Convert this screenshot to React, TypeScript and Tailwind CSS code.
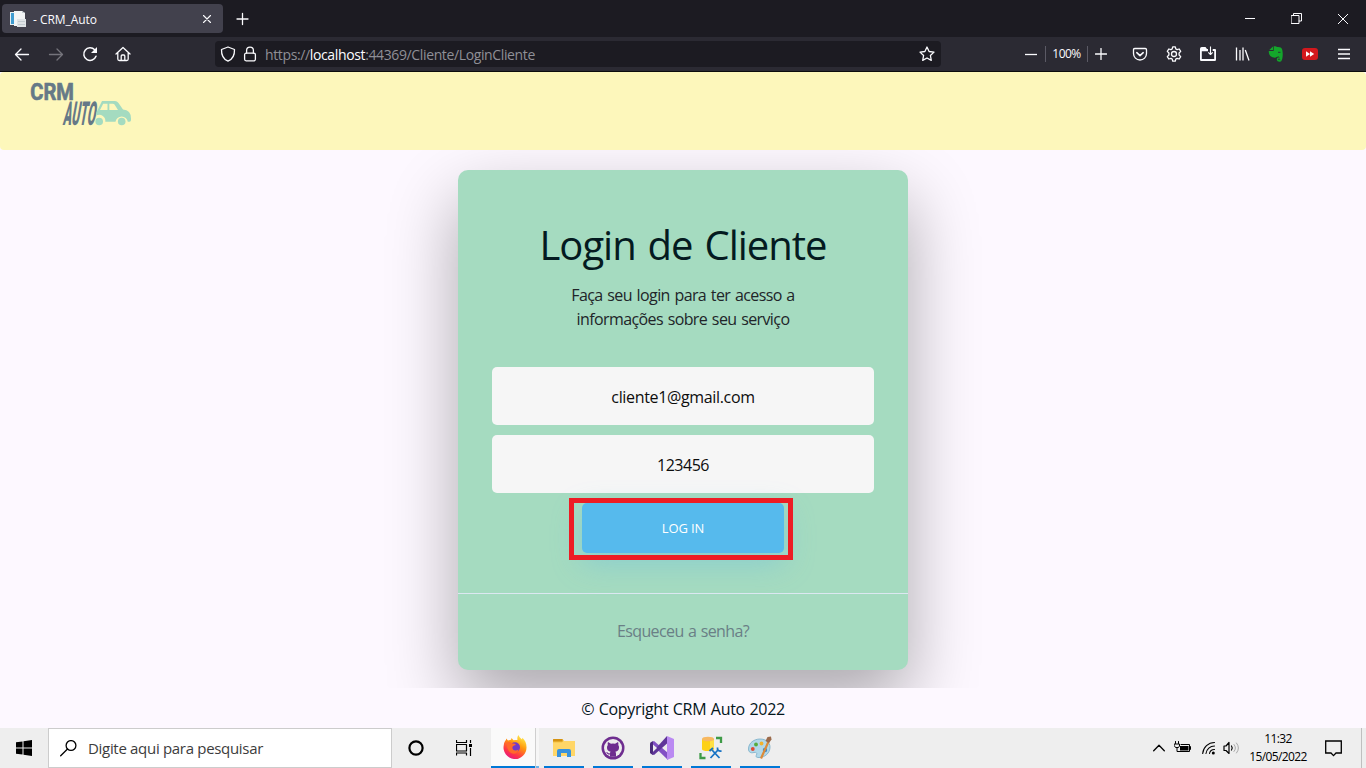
import React from 'react';

type IconProps = { className?: string; children: React.ReactNode; w?: number; h?: number };

function Icon({ className = '', children, w = 16, h = 16 }: IconProps) {
  return (
    <svg
      width={w}
      height={h}
      viewBox={`0 0 ${w} ${h}`}
      fill="none"
      stroke="currentColor"
      strokeWidth="1.3"
      strokeLinecap="round"
      strokeLinejoin="round"
      className={`block shrink-0 ${className}`}
    >
      {children}
    </svg>
  );
}

function TabBar() {
  return (
    <div className="flex h-[37px] items-start bg-[#1c1b22] text-[#fbfbfe]">
      <div className="ml-0.5 mt-1 flex h-[29px] w-[221px] items-center rounded bg-[#42414d] pl-2 pr-[11px]">
        <Icon className="mr-[7px]">
          <g stroke="none">
            <path d="M0 1h5v13H0z" fill="#e6eef2" />
            <path d="M1 2h3v11H1z" fill="#3f9bd0" />
            <path d="M4 0h8l3 2v13H4z" fill="#f2f4f5" />
            <path d="M12 0l3 2h-3z" fill="#c3cbd0" />
            <path d="M7 8h9v8H7z" fill="#dfe3e6" />
            <path d="M8 10h7v1H8zM8 13h7v1H8z" fill="#c3cbd0" />
          </g>
        </Icon>
        <span className="flex-1 whitespace-nowrap pt-0.5 text-[12px] tracking-[-0.05px]">- CRM_Auto</span>
        <Icon w={10} h={10}>
          <path d="M1.5 1.5l7 7M8.5 1.5l-7 7" strokeWidth="1.1" />
        </Icon>
      </div>
      <Icon w={14} h={14} className="ml-3 mt-3">
        <path d="M7.500 1.500v11M2 7h11" />
      </Icon>
      <div className="ml-auto flex h-[37px] items-center gap-9 pr-[18px]">
        <Icon w={10} h={10}>
          <path d="M0 4.500h10" strokeWidth="1" strokeLinecap="butt" />
        </Icon>
        <Icon w={11} h={11}>
          <path d="M.5 2.500h7.500v8H.5zM2.500 2.500v-2h8v7.500h-2.500" strokeWidth="1" />
        </Icon>
        <Icon w={10} h={10}>
          <path d="M0 0l10 10M10 0L0 10" strokeWidth="1" />
        </Icon>
      </div>
    </div>
  );
}

function NavBar() {
  return (
    <div className="flex h-[35px] items-center border-b border-[#0c0c0d] bg-[#2b2a33] text-[#fbfbfe]">
      <div className="ml-[14px] flex w-[201px] items-center gap-[18px]">
        <Icon>
          <path d="M14.500 8.500h-13M7 3L1.500 8.500 7 14" />
        </Icon>
        <Icon className="text-[#75747c]">
          <path d="M1.500 8.500h13M9 3l5.500 5.500L9 14" />
        </Icon>
        <Icon>
          <path d="M14 10.300A6.300 6.300 0 1 1 12.700 3.800" strokeWidth="1.500" />
          <path d="M15 1v6H9z" fill="currentColor" stroke="none" />
        </Icon>
        <Icon className="-ml-px">
          <path d="M1 8l7-6.500L15 8M2.800 6.800V13q0 1.500 1.500 1.500h7.400q1.500 0 1.500-1.500V6.800M6.200 14.500V10q0-1 1-1h1.600q1 0 1 1v4.500" />
        </Icon>
      </div>
      <div className="flex h-[26px] w-[726px] items-center rounded bg-[#1c1b22] pl-[5px] pr-1.5">
        <Icon>
          <path d="M8 1l6.500 2.500C14.700 9 12 13.500 8 15.200 4 13.500 1.300 9 1.500 3.500z" />
        </Icon>
        <Icon className="ml-1.5">
          <rect x="2.600" y="7.200" width="10.800" height="7.600" rx="1.500" />
          <path d="M4.600 7V4.500a3.400 3.400 0 0 1 6.800 0V7" />
        </Icon>
        <span className="ml-[7px] flex-1 whitespace-nowrap pt-px text-[14px] tracking-[-0.37px] text-[#8f8f96]">
          https://<span className="text-[#fbfbfe]">localhost</span>:44369/Cliente/LoginCliente
        </span>
        <Icon>
          <path d="M8 1l2.100 4.500 4.900.6-3.600 3.400.9 4.900L8 12l-4.300 2.400.9-4.900L1 6.100l4.900-.6z" />
        </Icon>
      </div>
      <div className="ml-auto flex items-center pr-[14px]">
        <Icon w={12} h={12}>
          <path d="M0 6.500h12" strokeLinecap="butt" />
        </Icon>
        <span className="ml-2 flex h-4 w-[43px] items-center justify-center border-x border-[#5b5a65] text-[12px] tracking-[-0.55px]">
          100%
        </span>
        <Icon w={12} h={12} className="ml-[7px]">
          <path d="M6 .5v11M.5 6h11" />
        </Icon>
        <div className="ml-[25px] flex gap-[18px]">
          <Icon>
            <path d="M2.700 2.500h10.600q1.200 0 1.200 1.200v3.800a6.500 6.500 0 0 1-13 0V3.700q0-1.200 1.200-1.200z" />
            <path d="M4.800 6.700L8 9.700l3.200-3" strokeWidth="1.600" />
          </Icon>
          <Icon>
            <path d="M6.700.8h2.600l.5 2.100 1.300.8 2.100-.7 1.500 2.400-1.600 1.600v2l1.600 1.600-1.500 2.400-2.100-.7-1.300.8-.5 2.100H6.700l-.5-2.100-1.300-.8-2.100.7-1.500-2.400L2.900 9V7L1.300 5.400 2.800 3l2.100.7 1.300-.8z" />
            <circle cx="8" cy="8" r="2.500" />
          </Icon>
          <Icon>
            <path
              d="M1.800 1H5.500L7 3h1v2.300H1.800V13h12.400V5h-1.500V3H15q1 0 1 1v9.800q0 1.200-1.200 1.200H1.200Q0 15 0 13.800V2.800Q0 1 1.800 1z"
              fill="currentColor"
              stroke="none"
              fillRule="evenodd"
            />
            <path d="M10.500.5v8M8.300 6.300l2.200 2.200 2.200-2.200" strokeWidth="1.100" strokeLinecap="butt" />
          </Icon>
          <Icon className="translate-x-px">
            <path d="M1.500 1.500v13M5 4v10.500M8 1.500v13M10.300 4l3.700 10.500" strokeLinecap="butt" />
          </Icon>
          <Icon>
            <g fill="#14a52b" stroke="none">
              <path d="M1.300 4L5 .5V4zM5.700.2C7.500 0 8.500.8 10 1c3 .2 3.800 1 4.300 3 .8 3.800.5 8.500-.8 10.700-.9 1.600-4.700 1.300-4.700-1.200 0-2 1.900-2.500 2.800-1.500-.2-1.900-2-1.500-3-.9-.8 1.100-2.500.7-4.100.2C2 10.500.5 8 .8 4.900h4.900z" />
            </g>
            <path d="M10.400 6.300h1.700M10.300 13.200q1-.6 1.700.2" stroke="#2b2a33" strokeWidth=".9" />
          </Icon>
          <Icon>
            <rect x="0" y="2" width="16" height="12" rx="3" fill="#d3181d" stroke="none" />
            <path d="M4 5.300v5.400L8 8zM8 5.300v5.400L12.200 8z" fill="white" stroke="none" />
          </Icon>
          <Icon>
            <path d="M2 3.500h12M2 8h12M2 12.500h12" strokeLinecap="butt" />
          </Icon>
        </div>
      </div>
    </div>
  );
}

function Logo() {
  return (
    <svg width="110" height="56" viewBox="0 0 110 56" className="block overflow-visible">
      <text
        transform="translate(.3 20.300) scale(.84 1)"
        fontFamily="Roboto, sans-serif"
        fontWeight="700"
        fontSize="24"
        fill="#667987"
        stroke="#667987"
        strokeWidth=".7"
        strokeLinejoin="round"
        textLength="52"
        lengthAdjust="spacing"
      >
        CRM
      </text>
      <text
        transform="translate(32.500 45) skewX(-10) scale(.5 1)"
        fontFamily="Roboto, sans-serif"
        fontWeight="900"
        fontSize="33"
        fill="#667987"
        textLength="64"
        lengthAdjust="spacingAndGlyphs"
      >
        AUTO
      </text>
      <path
        fillRule="evenodd"
        fill="#a4dbc0"
        d="M72 21h13q2 0 3.500 2l4.500 6.500q8 .5 8 9V40q0 1.800-1.500 1.800H97.800a6.200 6.200 0 0 0-12.300 0H75.300a6.200 6.200 0 0 0-8.800-6.500v-3zM70 30h7.500v-6.300h-4.300zM79.300 23.700V30h8.700l-3.500-5.400q-.7-.9-1.700-.9z"
      />
      <g fill="#a4dbc0">
        <circle cx="69.200" cy="41.500" r="3.800" />
        <circle cx="91.700" cy="41.500" r="3.800" />
      </g>
    </svg>
  );
}

function LoginCard() {
  return (
    <div className="flex h-[500px] w-[450px] flex-col items-center rounded-[10px] bg-[#a5dbc0] text-center shadow-[0_30px_70px_0_rgba(0,0,0,0.33)]">
      <h1 className="mt-[51px] whitespace-nowrap text-[40px] leading-[48px] tracking-[-1px] text-[#041a20] [word-spacing:2.5px]">
        Login de Cliente
      </h1>
      <p className="mt-[14px] whitespace-nowrap text-[16px] leading-6 tracking-[-0.6px] text-[#212529] [word-spacing:1.1px]">
        Faça seu login para ter acesso a
        <br />
        informações sobre seu serviço
      </p>
      <div className="mt-9 flex h-[58px] w-[382px] items-center justify-center rounded-[5px] bg-[#f6f6f6] pt-0.5 text-[16px] tracking-[-0.34px] text-[#0d0d0d]">
        cliente1@gmail.com
      </div>
      <div className="mt-2.5 flex h-[58px] w-[382px] items-center justify-center rounded-[5px] bg-[#f6f6f6] pt-0.5 text-[16px] tracking-[-0.5px] text-[#0d0d0d]">
        123456
      </div>
      <div className="relative mt-2.5">
        <button className="block h-[50px] w-[202px] rounded-[5px] bg-[#56baed] pt-0.5 text-[13px] tracking-[-0.1px] text-white shadow-[0_10px_30px_0_rgba(95,186,233,0.4)]">
          LOG IN
        </button>
        <div className="absolute -left-[13px] -top-[5px] h-[62px] w-[224px] border-[5px] border-[#ed1c24]" />
      </div>
      <div className="mt-10 flex w-full flex-1 items-center justify-center border-t border-[#dce8f1] pb-0.5 text-[16px] tracking-[-0.6px] text-[#6a7f86] [word-spacing:0.8px]">
        Esqueceu a senha?
      </div>
    </div>
  );
}

function Page() {
  return (
    <div className="flex h-[656px] flex-col bg-[#fdf8ff]">
      <header className="h-[78px] shrink-0 rounded bg-[#fdf7bb] pl-[30px] pt-2">
        <Logo />
      </header>
      <main className="flex h-[538px] shrink-0 justify-center overflow-hidden pt-5">
        <LoginCard />
      </main>
      <footer className="flex h-10 items-center justify-center pb-px pt-0.5 text-[16px] tracking-[-0.3px] text-[#04151c] [word-spacing:0.7px]">
        © Copyright CRM Auto 2022
      </footer>
    </div>
  );
}

function FirefoxIcon() {
  return (
    <svg width="24" height="24" viewBox="0 0 24 24" className="block">
      <defs>
        <linearGradient id="fox" x1="0.8" y1="0" x2="0.25" y2="1">
          <stop offset="0" stopColor="#fff44f" />
          <stop offset=".4" stopColor="#ff980e" />
          <stop offset=".75" stopColor="#ff3647" />
          <stop offset="1" stopColor="#e31587" />
        </linearGradient>
      </defs>
      <path
        fill="url(#fox)"
        d="M15.500 0c.5 2 2 3.200 3.500 4.500l.4-1.700C22 5 23.500 8.500 23.500 12A11.500 11.500 0 1 1 .8 10C1 7.500 2 6 3 5V3.500l2 2 3-.8L8.500 3l2 2.200c2-.3 3.500-.3 4-.2-.5-2 .2-3.800 1-5z"
      />
      <circle cx="12" cy="12.300" r="5" fill="#7139c8" />
      <path d="M4 7.500c2-1 4-.5 5.500 1 2-.2 3 .5 3.500 1.500-2 .3-3 1-3.500 2-.7 3.300 3 4.500 6 2.500-.5 3.500-4 5-7 3.700C5 16.500 3.500 12 4 7.500z" fill="#ff6a2a" />
    </svg>
  );
}

function FolderIcon() {
  return (
    <svg width="22" height="20" viewBox="0 0 22 20" className="block">
      <path d="M0 1.500Q0 1 .8 1h8.700L11 3h10q1 0 1 1v14H0z" fill="#f5c243" />
      <path d="M0 1.500Q0 1 .8 1H9.500v2.500H0z" fill="#d49212" />
      <path d="M0 4.500h9L10.500 3H22v15H0z" fill="#ffd667" />
      <path d="M4 19v-6q0-2 2-2h10q2 0 2 2v6h-4v-4H8v4z" fill="#3892dc" />
    </svg>
  );
}

function GithubIcon() {
  return (
    <svg width="24" height="24" viewBox="0 0 24 24" className="block">
      <circle cx="12" cy="12" r="11.500" fill="#6e2d8f" />
      <circle cx="12" cy="12" r="9" fill="#ededed" />
      <path
        d="M7 6l3 1.700q2-.4 4 0L17 6q.7 1.500.3 3 1 1.300.7 3-.3 3.300-3.700 3.700.7.700.7 2v3h-6v-2.200c-2 .4-2.800-.8-3.300-1.800L5 16c2-.4 2 2 4 1.300q0-1.200.7-1.600Q6.300 15.300 6 12q-.2-1.700.8-3-.4-1.500.2-3z"
        fill="#6e2d8f"
      />
    </svg>
  );
}

function VisualStudioIcon() {
  return (
    <svg width="24" height="24" viewBox="0 0 24 24" className="block">
      <path d="M1.500 6L4 5l14 12v7L2 8.500z" fill="#8250c4" />
      <path d="M0 7.300Q0 6.300 3 5.200V19Q0 17.800 0 16.700z" fill="#4a2a7a" />
      <path d="M3 15.500L17 0v7.500L4 19l-2-.8z" fill="#5f3599" />
      <path d="M3 8.500L7 12l-4 3.700z" fill="#eee" />
      <path d="M17 0l7 3v18l-7 3z" fill="#ba8af2" />
    </svg>
  );
}

function DatabaseToolsIcon() {
  return (
    <svg width="24" height="24" viewBox="0 0 24 24" className="block">
      <path d="M3 3v10q0 2 6 2t6-2V3z" fill="#fdd116" />
      <path d="M11 4h4v9q0 1-4 1.900z" fill="#ffe045" />
      <ellipse cx="9" cy="3" rx="6" ry="2.300" fill="#f7b860" />
      <path d="M17 2h5v5M1.500 17v5h5" fill="none" stroke="#3e9b47" strokeWidth="2.300" />
      <g fill="none" stroke="#1672c4" strokeWidth="1.800">
        <path d="M11.500 22l7.500-8M13 14l7.500 8" />
        <path d="M18.500 11.500q-.5 4 4 3.500M10.500 15l3.500-3" />
      </g>
    </svg>
  );
}

function PaintIcon() {
  return (
    <svg width="24" height="24" viewBox="0 0 24 24" className="block">
      <path
        d="M12 3c6 0 10 3.500 10 8 0 6-5 10.500-11 10.500-3 0-3.500-1-2.500-2.500 1-2-.5-3-2.500-2.500C2.500 17.500.5 16 .5 13 .5 7 6 3 12 3z"
        fill="#b2d8e9"
        stroke="#76acc7"
        strokeWidth=".8"
      />
      <circle cx="4.800" cy="13" r="1.900" fill="#e04935" />
      <circle cx="8" cy="8.500" r="1.900" fill="#55ac3e" />
      <circle cx="13.500" cy="7.500" r="1.900" fill="#f2b22e" />
      <circle cx="17" cy="14" r="2.200" fill="#3b86c9" />
      <path d="M20.500 5.500L13 22.500" stroke="#dc8b3a" strokeWidth="2.200" />
      <path d="M17.500 5l2-4 3.500-.5.500 3L21 7z" fill="#9b6b4c" />
    </svg>
  );
}

function Taskbar() {
  return (
    <div className="flex h-10 items-center overflow-hidden bg-[#eeeeee] text-black">
      <div className="flex w-12 justify-center">
        <Icon>
          <path d="M0 2.300L6.500 1.400v6.100H0zM7.500 1.200L16 0v7.500H7.500zM0 8.500h6.500v6.100L0 13.700zM7.500 8.500H16V16l-8.500-1.200z" fill="currentColor" stroke="none" />
        </Icon>
      </div>
      <div className="flex h-10 w-[344px] items-center border border-[#cccccc] bg-white pl-[11px]">
        <Icon w={17} h={17}>
          <circle cx="11" cy="5.500" r="4.900" />
          <path d="M7.500 9L.7 15.800" />
        </Icon>
        <span className="ml-[11px] whitespace-nowrap text-[15px] tracking-[-0.31px] text-[#3c3c3c]">Digite aqui para pesquisar</span>
      </div>
      <div className="flex w-12 justify-center">
        <Icon>
          <circle cx="8" cy="8" r="6.600" strokeWidth="2.200" />
        </Icon>
      </div>
      <div className="flex w-12 justify-center">
        <Icon>
          <path d="M.5 0v2.500h10V0M.5 15.500V13h10v2.500M.5 4.500h10v6.500H.5zM14.500 0v3M14.500 8v8" strokeWidth="1.200" strokeLinecap="butt" />
          <path d="M13 4h3v3h-3z" fill="currentColor" stroke="none" />
        </Icon>
      </div>
      <div className="ml-[3px] flex h-10">
        <div className="flex w-12">
          <div className="flex h-10 w-11 items-center justify-center border-b-2 border-[#0078d7] bg-[#fafafa] pl-1">
            <FirefoxIcon />
          </div>
          <div className="h-10 w-px bg-[#cfcfcf]" />
          <div className="h-10 w-[3px] border-b-2 border-[#6fb3e8] bg-[#f6f6f6]" />
        </div>
        <div className="ml-[5px] flex gap-[9px]">
          {[<FolderIcon />, <GithubIcon />, <VisualStudioIcon />, <DatabaseToolsIcon />, <PaintIcon />].map((icon, i) => (
            <div key={i} className="flex h-10 w-10 items-center justify-center border-b-2 border-[#0078d7] pt-px">
              {icon}
            </div>
          ))}
        </div>
      </div>
      <div className="ml-auto flex h-10 items-center">
        <Icon w={12} h={8}>
          <path d="M.7 6.700L6 1.300l5.300 5.400" />
        </Icon>
        <Icon w={17} h={14} className="ml-[9px] mr-px">
          <path d="M7 3.500h8.500v7H5M15.500 5.500h1v3h-1M1.500.5v2M4.500.5v2M.5 3h5v2l-1 1.500h-3L.5 5zM3 6.500v4h2" strokeWidth="1" />
          <path d="M6 5h8.500v4.500H6z" fill="currentColor" stroke="none" />
        </Icon>
        <Icon w={14} h={14} className="ml-2.5">
          <path d="M.7 12.500A12 12 0 0 1 12.500 1.500M4 12.500a8.500 8.500 0 0 1 8.500-7.500M7.500 12.500a5 5 0 0 1 5-4" strokeWidth="1.100" />
          <circle cx="11.300" cy="12" r="1.500" fill="currentColor" stroke="none" />
        </Icon>
        <Icon w={17} h={14} className="ml-[7px]">
          <path d="M1 5h2l3-3.500v11L3 9.500H1zM8.500 5q1.500 2 0 4" strokeWidth="1.200" />
          <path d="M11 3.500q3 3.500 0 7M13.500 2q4 5 0 10" stroke="#aaa" strokeWidth="1" />
        </Icon>
        <div className="ml-1.5 w-[64px] text-center text-[12px] leading-[18px] tracking-[-0.6px]">
          <div>11:32</div>
          <div>15/05/2022</div>
        </div>
        <Icon w={17} h={17} className="ml-[15px] mr-[19px]">
          <path d="M.7 1h15.600v12H11l-2.500 2.600L6 13H.7z" strokeLinejoin="miter" />
        </Icon>
        <div className="mr-1 h-10 w-px bg-[#bfbfbf]" />
      </div>
    </div>
  );
}

export default function App() {
  return (
    <div className="flex h-[768px] w-[1366px] flex-col overflow-hidden font-['Open_Sans','Noto_Sans',sans-serif]">
      <TabBar />
      <NavBar />
      <Page />
      <Taskbar />
    </div>
  );
}
